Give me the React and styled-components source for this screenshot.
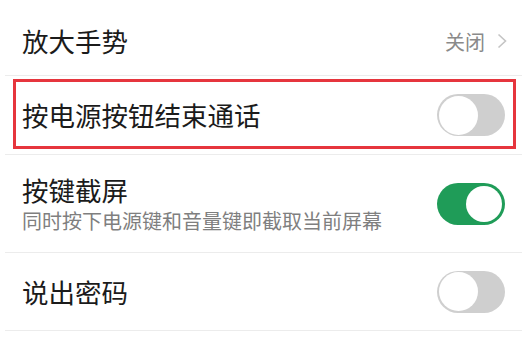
import React from 'react';
import styled, { createGlobalStyle } from 'styled-components';

const GlobalStyle = createGlobalStyle`
  * { box-sizing: border-box; }
  body {
    margin: 0;
    background: #fff;
    font-family: "Noto Sans CJK SC", "Noto Sans", sans-serif;
  }
`;

const List = styled.div`
  margin: 0 2px 0 5px;
  display: flex;
  flex-direction: column;
`;

const Row = styled.div`
  height: ${(p) => p.$h}px;
  display: flex;
  flex-direction: column;
  justify-content: center;
  border-bottom: 1.5px solid #ececec;
  padding: ${(p) => p.$pad || '0 17px'};
`;

const Highlight = styled.div`
  flex: 1;
  display: flex;
  align-items: center;
  justify-content: space-between;
  border: 3px solid #e6353d;
  padding: 2px 8px 0 6px;
`;

const Line = styled.div`
  display: flex;
  align-items: center;
  justify-content: space-between;
  padding-top: ${(p) => p.$top || 0}px;
`;

const Texts = styled.div`
  display: flex;
  flex-direction: column;
  gap: 4px;
`;

const Title = styled.div`
  font-size: 26.5px;
  line-height: 30px;
  color: #1b1b1b;
`;

const Sub = styled.div`
  font-size: 20px;
  line-height: 24px;
  color: #7f7f7f;
`;

const Value = styled.div`
  display: flex;
  align-items: center;
  gap: 12px;
  font-size: 20px;
  color: #8a8a8a;
  margin-right: -2px;
`;

const Track = styled.div`
  width: 68px;
  height: 42px;
  border-radius: 21px;
  background: ${(p) => (p.$on ? '#1f9c58' : '#cfcfcf')};
  padding: ${(p) => (p.$on ? '3px' : '1.5px')};
  display: flex;
  justify-content: ${(p) => (p.$on ? 'flex-end' : 'flex-start')};
`;

const Knob = styled.div`
  width: ${(p) => (p.$on ? 36 : 39)}px;
  height: ${(p) => (p.$on ? 36 : 39)}px;
  border-radius: 50%;
  background: #fff;
`;

function Toggle({ on }) {
  return (
    <Track $on={on}>
      <Knob $on={on} />
    </Track>
  );
}

function Chevron() {
  return (
    <svg width="10" height="16" viewBox="0 0 10 16">
      <polyline points="1.5,1.5 8.5,8 1.5,14.5" fill="none" stroke="#c4c4c4" strokeWidth="1.6" />
    </svg>
  );
}

export default function App() {
  return (
    <>
      <GlobalStyle />
      <List>
        <Row $h={76}>
          <Line $top={7}>
            <Title>放大手势</Title>
            <Value>
              关闭
              <Chevron />
            </Value>
          </Line>
        </Row>
        <Row $h={79} $pad="3px 6px 5px 8px">
          <Highlight>
            <Title>按电源按钮结束通话</Title>
            <Toggle on={false} />
          </Highlight>
        </Row>
        <Row $h={98}>
          <Line>
            <Texts>
              <Title>按键截屏</Title>
              <Sub>同时按下电源键和音量键即截取当前屏幕</Sub>
            </Texts>
            <Toggle on />
          </Line>
        </Row>
        <Row $h={78}>
          <Line>
            <Title>说出密码</Title>
            <Toggle on={false} />
          </Line>
        </Row>
      </List>
    </>
  );
}
